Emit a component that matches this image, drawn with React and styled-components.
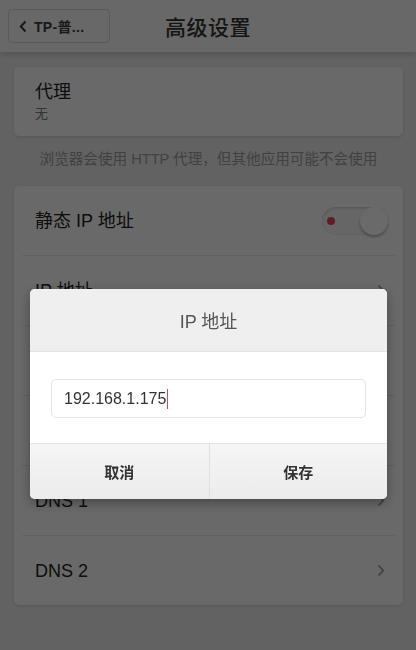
import React from 'react';
import styled, { createGlobalStyle } from 'styled-components';

const GlobalStyle = createGlobalStyle`
    html, body {
        margin: 0;
        padding: 0;
        background: #e9e9e9;
        font-family: "Liberation Sans", "Noto Sans CJK SC", sans-serif;
    }
`;

const Page = styled.div`
    min-height: 650px;
    background: #e9e9e9;
`;

const Header = styled.header`
    position: relative;
    height: 52px;
    display: grid;
    grid-template-columns: 1fr auto 1fr;
    align-items: center;
    background: #f7f7f7;
    box-shadow: 0 2px 6px rgba(0, 0, 0, 0.18);
`;

const BackButton = styled.button`
    justify-self: start;
    margin-left: 8px;
    height: 34px;
    width: 102px;
    display: flex;
    align-items: center;
    gap: 7px;
    padding: 0 0 0 10px;
    border: 1px solid #d6d6d6;
    border-radius: 4px;
    background: #f7f7f7;
    color: #3a3a3a;
    font-family: inherit;
    font-size: 14px;
    font-weight: 600;
    letter-spacing: 0.3px;
`;

const Title = styled.h1`
    margin: 0;
    font-size: 21px;
    font-weight: 500;
    color: #333;
    letter-spacing: 0.5px;
`;

const Content = styled.main`
    padding: 15px 13px 0 14px;
`;

const Card = styled.section`
    background: #fbfbfb;
    border-radius: 5px;
    box-shadow: 0 1px 3px rgba(0, 0, 0, 0.12);
`;

const ProxyItem = styled.div`
    height: 69px;
    padding: 0 21px;
    display: flex;
    flex-direction: column;
    justify-content: center;
`;

const ItemLabel = styled.div`
    font-size: 18px;
    color: #222;
    line-height: 24px;
`;

const ItemValue = styled.div`
    font-size: 13px;
    color: #777;
    line-height: 19px;
`;

const Hint = styled.p`
    margin: 0;
    padding: 12px 0 16px;
    line-height: 22px;
    text-align: center;
    font-size: 14.6px;
    color: #9c9c9c;
`;

const Row = styled.div`
    height: 69px;
    padding: 0 18px 0 21px;
    display: flex;
    align-items: center;
    justify-content: space-between;
    & + & {
        border-top: 1px solid #e6e6e6;
        margin: 0 8px;
        padding: 0 10px 0 13px;
    }
`;

const Toggle = styled.div`
    position: relative;
    width: 66px;
    height: 28px;
    margin-right: -3px;
    border-radius: 14px;
    background: #f3f3f3;
    box-shadow: inset 0 1px 3px rgba(0, 0, 0, 0.18);
`;

const ToggleDot = styled.span`
    position: absolute;
    left: 5px;
    top: 10px;
    width: 8px;
    height: 8px;
    border-radius: 50%;
    background: #e3455c;
`;

const ToggleKnob = styled.span`
    position: absolute;
    right: 0;
    top: 0;
    width: 28px;
    height: 28px;
    border-radius: 50%;
    background: #fdfdfd;
    box-shadow: 0 2px 3px rgba(0, 0, 0, 0.3);
`;

const Overlay = styled.div`
    position: fixed;
    inset: 0;
    background: rgba(0, 0, 0, 0.58);
    display: flex;
    justify-content: center;
    align-items: flex-start;
    padding-top: 289px;
`;

const Dialog = styled.div`
    width: 357px;
    margin-left: 1px;
    border-radius: 5px;
    overflow: hidden;
    background: #fff;
    box-shadow: 0 4px 12px rgba(0, 0, 0, 0.35);
`;

const DialogTitle = styled.div`
    height: 62px;
    display: flex;
    align-items: center;
    justify-content: center;
    background: #efefef;
    border-bottom: 1px solid #e2e2e2;
    font-size: 18px;
    color: #555;
`;

const DialogBody = styled.div`
    height: 92px;
    padding: 27px 21px 0;
    box-sizing: border-box;
    border-bottom: 1px solid #e4e4e4;
`;

const Field = styled.div`
    height: 39px;
    box-sizing: border-box;
    padding: 0 12px;
    display: flex;
    align-items: center;
    border: 1px solid #e3e3e3;
    border-radius: 5px;
    font-size: 16px;
    color: #333;
`;

const Caret = styled.span`
    width: 1px;
    height: 20px;
    margin-left: 1px;
    background: #e0454f;
`;

const DialogActions = styled.div`
    height: 55px;
    display: grid;
    grid-template-columns: 1fr 1fr;
    background: linear-gradient(#f5f5f5, #ececec);
`;

const ActionButton = styled.button`
    border: none;
    background: transparent;
    font-family: inherit;
    font-size: 15px;
    font-weight: 600;
    color: #333;
    & + & {
        border-left: 1px solid #e0e0e0;
    }
`;

const BackArrow = () => (
    <svg width="8" height="13" viewBox="0 0 8 13">
        <polyline points="6.5,1.5 1.8,6.5 6.5,11.5" fill="none" stroke="#3a3a3a" strokeWidth="2" />
    </svg>
);

const Chevron = () => (
    <svg width="8" height="13" viewBox="0 0 8 13">
        <polyline points="1.5,1.5 6.2,6.5 1.5,11.5" fill="none" stroke="#9a9a9a" strokeWidth="1.8" />
    </svg>
);

const staticRows = ['IP 地址', '网关', '网络前缀长度', 'DNS 1', 'DNS 2'];

const App = () => {
    const ip = '192.168.1.175';

    return (
        <Page>
            <GlobalStyle />
            <Header>
                <BackButton>
                    <BackArrow />
                    TP-普...
                </BackButton>
                <Title>高级设置</Title>
            </Header>
            <Content>
                <Card>
                    <ProxyItem>
                        <ItemLabel>代理</ItemLabel>
                        <ItemValue>无</ItemValue>
                    </ProxyItem>
                </Card>
                <Hint>浏览器会使用 HTTP 代理，但其他应用可能不会使用</Hint>
                <Card>
                    <Row>
                        <ItemLabel>静态 IP 地址</ItemLabel>
                        <Toggle>
                            <ToggleDot />
                            <ToggleKnob />
                        </Toggle>
                    </Row>
                    {staticRows.map(label => (
                        <Row key={label}>
                            <ItemLabel>{label}</ItemLabel>
                            <Chevron />
                        </Row>
                    ))}
                </Card>
            </Content>
            <Overlay>
                <Dialog>
                    <DialogTitle>IP 地址</DialogTitle>
                    <DialogBody>
                        <Field>
                            {ip}
                            <Caret />
                        </Field>
                    </DialogBody>
                    <DialogActions>
                        <ActionButton>取消</ActionButton>
                        <ActionButton>保存</ActionButton>
                    </DialogActions>
                </Dialog>
            </Overlay>
        </Page>
    );
};

export default App;
